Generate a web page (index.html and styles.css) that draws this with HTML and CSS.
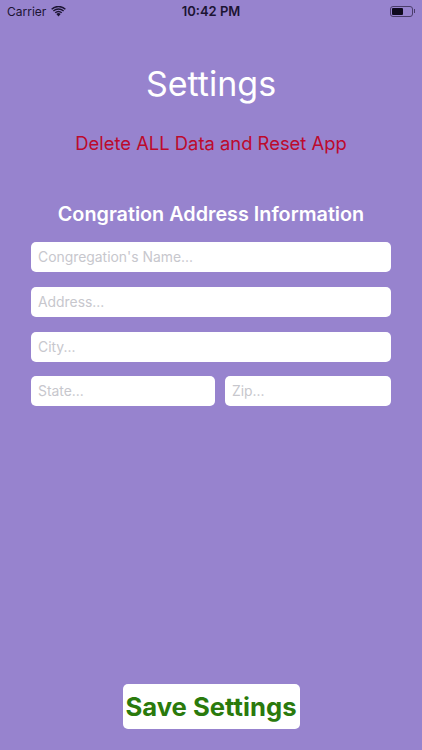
FILE: index.html
```html
<!DOCTYPE html>
<html lang="en">
<head>
    <meta charset="UTF-8">
    <meta name="viewport" content="width=device-width, initial-scale=1.0">
    <title>Settings</title>
    <link rel="stylesheet" href="styles.css">
</head>
<body>
    <div class="screen">
        <div class="status_bar">
            <div class="status_left">
                <span>Carrier</span>
                <svg class="wifi" viewBox="0 0 16 12" width="15" height="11">
                    <path d="M8 11.5 5.6 8.7a3.6 3.6 0 0 1 4.8 0z" fill="#1c1433"/>
                    <path d="M3.9 6.9a6.2 6.2 0 0 1 8.2 0L11.1 8a4.8 4.8 0 0 0-6.2 0z" fill="#1c1433"/>
                    <path d="M1.9 4.9a9 9 0 0 1 12.2 0l-1 1.2a7.5 7.5 0 0 0-10.2 0z" fill="#1c1433"/>
                    <path d="M0 2.9a11.8 11.8 0 0 1 16 0l-1 1.1a10.3 10.3 0 0 0-14 0z" fill="#1c1433"/>
                </svg>
            </div>
            <div class="status_time">10:42 PM</div>
            <div class="status_right">
                <div class="battery"><div class="battery_level"></div></div>
                <div class="battery_tip"></div>
            </div>
        </div>

        <h1 class="title">Settings</h1>
        <div class="reset_link">Delete ALL Data and Reset App</div>
        <h2 class="section_title">Congration Address Information</h2>

        <div class="form">
            <input class="field" type="text" placeholder="Congregation's Name...">
            <input class="field" type="text" placeholder="Address...">
            <input class="field" type="text" placeholder="City...">
            <div class="form_row">
                <input class="field state_field" type="text" placeholder="State...">
                <input class="field zip_field" type="text" placeholder="Zip...">
            </div>
        </div>

        <div class="footer">
            <button class="save_btn">Save Settings</button>
        </div>
    </div>
</body>
</html>
```

FILE: styles.css
```css
html, body {
    margin: 0;
    padding: 0;
}

.screen {
    width: 422px;
    height: 750px;
    background-color: #9783ce;
    font-family: Inter, "Liberation Sans", sans-serif;
    display: flex;
    flex-direction: column;
    overflow: hidden;
}

.status_bar {
    height: 22px;
    padding: 0 7px;
    display: flex;
    align-items: center;
    justify-content: space-between;
    font-size: 12px;
    color: #1c1433;
}

.status_left {
    width: 120px;
    display: flex;
    align-items: center;
    gap: 5px;
}

.status_time {
    font-size: 13px;
    font-weight: 600;
}

.status_right {
    width: 120px;
    display: flex;
    align-items: center;
    justify-content: flex-end;
}

.battery {
    width: 23px;
    height: 11px;
    border: 1px solid #4a3d6b;
    border-radius: 3px;
    padding: 1px;
    box-sizing: border-box;
    display: flex;
}

.battery_level {
    width: 11px;
    background-color: #0f0a1e;
    border-radius: 1px;
}

.battery_tip {
    width: 1px;
    height: 4px;
    margin-left: 1px;
    background-color: #4a3d6b;
}

.title {
    margin: 38px 0 0;
    font-size: 34px;
    line-height: 48px;
    font-weight: 400;
    color: #fff;
    text-align: center;
}

.reset_link {
    margin-top: 22px;
    font-size: 18.4px;
    line-height: 26px;
    color: #bd0a2c;
    text-align: center;
}

.section_title {
    margin: 45px 0 0;
    font-size: 19.8px;
    line-height: 26px;
    font-weight: 600;
    color: #fff;
    text-align: center;
}

.form {
    margin: 15px 31px 0;
    display: flex;
    flex-direction: column;
    gap: 15px;
}

.form_row {
    margin-top: -1px;
    display: flex;
    gap: 10px;
}

.state_field {
    width: 184px;
}

.zip_field {
    flex: 1;
    min-width: 0;
}

.field {
    height: 30px;
    padding: 0 7px;
    border: none;
    border-radius: 5px;
    background-color: #fff;
    box-sizing: border-box;
    font-family: inherit;
    font-size: 13.9px;
}

.field::placeholder {
    color: #c7c7cd;
    opacity: 1;
}

.footer {
    margin-top: auto;
    padding-bottom: 21px;
    display: flex;
    justify-content: center;
}

.save_btn {
    width: 177px;
    height: 45px;
    padding: 0;
    border: none;
    border-radius: 5px;
    background-color: #fff;
    color: #2a7a0c;
    font-family: inherit;
    font-size: 25.7px;
    font-weight: 700;
}
```
